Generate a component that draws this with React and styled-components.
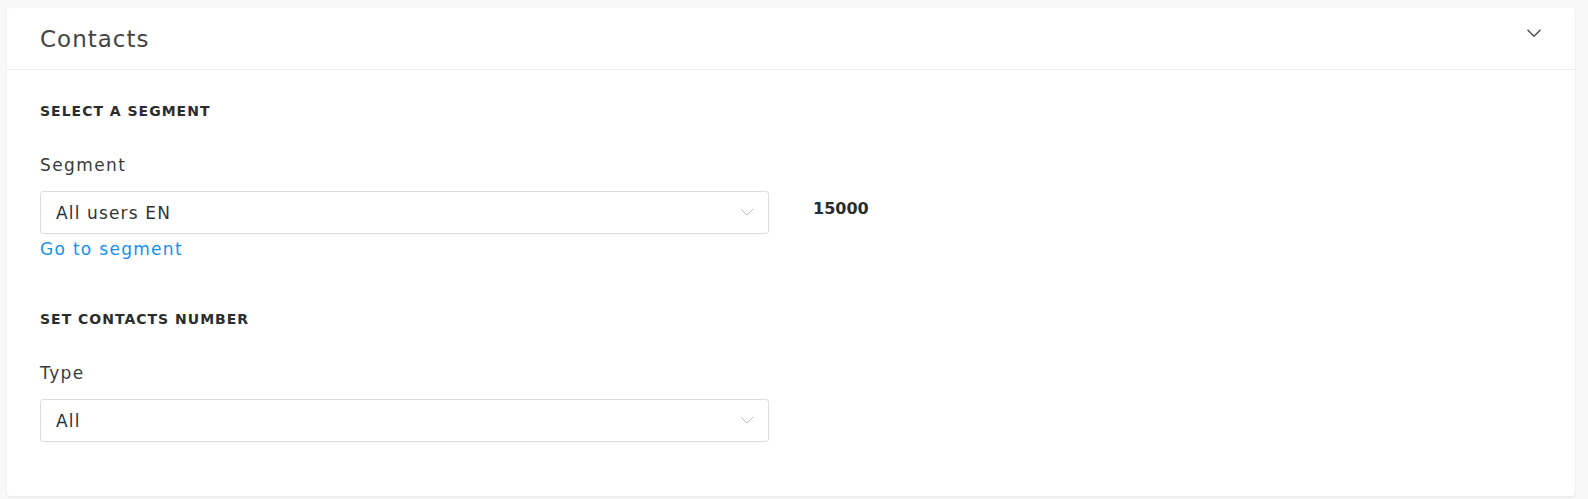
import React from 'react';
import styled, { createGlobalStyle } from 'styled-components';

const GlobalStyle = createGlobalStyle`
  html, body {
    margin: 0;
    padding: 0;
    background: #f8f8f8;
    font-family: "DejaVu Sans", "Open Sans", sans-serif;
    color: #333;
  }
`;

const Page = styled.div`
  padding: 8px 13px 8px 7px;
`;

const Card = styled.section`
  background: #fff;
  border-radius: 4px;
  box-shadow: 0 1px 3px rgba(0, 0, 0, 0.08);
`;

const CardHeader = styled.header`
  display: flex;
  align-items: center;
  justify-content: space-between;
  height: 62px;
  padding: 0 34px 0 33px;
  border-bottom: 1px solid #ececec;
  box-sizing: border-box;
`;

const Title = styled.h2`
  margin: 0;
  font-size: 23px;
  line-height: 28px;
  font-weight: 400;
  letter-spacing: 1px;
  color: #444;
`;

const Toggle = styled.span`
  display: flex;
  margin-bottom: 10px;
`;

const Chevron = ({ size = 14, color = '#555', width = 1.6 }) => (
  <svg width={size} height={size * 0.6} viewBox="0 0 14 8" fill="none">
    <path d="M1 1l6 6 6-6" stroke={color} strokeWidth={width} strokeLinecap="round" strokeLinejoin="round" />
  </svg>
);

const CardBody = styled.div`
  padding: 31px 33px 54px;
`;

const Section = styled.div`
  & + & {
    margin-top: 49px;
  }
`;

const SectionTitle = styled.h3`
  margin: 0 0 33px;
  font-size: 14px;
  line-height: 20px;
  font-weight: 700;
  letter-spacing: 1px;
  color: #2c2c2c;
`;

const Label = styled.div`
  font-size: 17px;
  line-height: 22px;
  letter-spacing: 1.4px;
  color: #3a3a3a;
  margin-bottom: 15px;
`;

const FieldRow = styled.div`
  display: flex;
  align-items: flex-start;
  gap: 44px;
`;

const FieldColumn = styled.div`
  width: 729px;
`;

const Select = styled.div`
  display: flex;
  align-items: center;
  justify-content: space-between;
  height: 43px;
  box-sizing: border-box;
  padding: 0 14px 0 15px;
  border: 1px solid #dcdcdc;
  border-radius: 3px;
  font-size: 17px;
  letter-spacing: 1.15px;
  color: #333;
`;

const Link = styled.a`
  display: inline-block;
  margin-top: 4px;
  font-size: 17px;
  line-height: 22px;
  letter-spacing: 1.3px;
  color: #1a8fe8;
  text-decoration: none;
  cursor: pointer;
`;

const Count = styled.div`
  font-size: 16px;
  font-weight: 700;
  color: #2c2c2c;
  line-height: 36px;
`;

export default function App() {
  return (
    <>
      <GlobalStyle />
      <Page>
        <Card>
          <CardHeader>
            <Title>Contacts</Title>
            <Toggle>
              <Chevron size={14} color="#555" width={1.6} />
            </Toggle>
          </CardHeader>
          <CardBody>
            <Section>
              <SectionTitle>SELECT A SEGMENT</SectionTitle>
              <Label>Segment</Label>
              <FieldRow>
                <FieldColumn>
                  <Select>
                    <span>All users EN</span>
                    <Chevron size={14} color="#bbb" width={1} />
                  </Select>
                  <Link>Go to segment</Link>
                </FieldColumn>
                <Count>15000</Count>
              </FieldRow>
            </Section>
            <Section>
              <SectionTitle>SET CONTACTS NUMBER</SectionTitle>
              <Label>Type</Label>
              <FieldColumn>
                <Select>
                  <span>All</span>
                  <Chevron size={14} color="#bbb" width={1} />
                </Select>
              </FieldColumn>
            </Section>
          </CardBody>
        </Card>
      </Page>
    </>
  );
}
